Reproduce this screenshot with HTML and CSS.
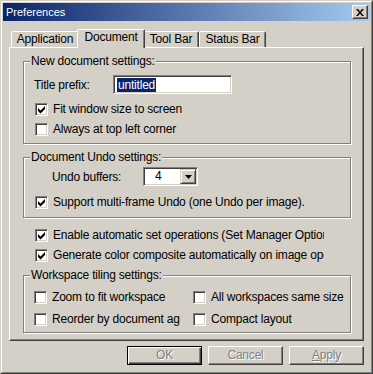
FILE: index.html
```html
<!DOCTYPE html>
<html lang="en">
<head>
    <meta charset="UTF-8">
    <title>Preferences</title>
    <link rel="stylesheet" href="styles.css">
</head>
<body>
    <div class="window">
        <div class="frame">
            <div class="titlebar">
                <span class="title">Preferences</span>
                <span class="close">
                    <svg width="8" height="7" viewBox="0 0 8 7"><path d="M0 0h2l2 2.4 2-2.4h2l-3 3.5 3 3.5h-2l-2-2.4-2 2.4h-2l3-3.5z" fill="#000"/></svg>
                </span>
            </div>

            <div class="client">
                <div class="tabs">
                    <div class="tab tab-app">Application</div>
                    <div class="tab tab-doc active">Document</div>
                    <div class="tab tab-tool">Tool Bar</div>
                    <div class="tab tab-status">Status Bar</div>
                </div>

                <div class="panel">
                    <div class="group g-new">
                        <div class="legend">New document settings:</div>
                        <div class="field">
                            <span class="field-label">Title prefix:</span>
                            <span class="textbox"><span class="selected">untitled</span></span>
                        </div>
                        <div class="check first">
                            <span class="box"><svg width="11" height="11" viewBox="0 0 11 11"><path d="M2 4l2.5 2.5L9 2v3L4.5 9.5 2 7z" fill="#000"/></svg></span>
                            <span class="text">Fit window size to screen</span>
                        </div>
                        <div class="check">
                            <span class="box"></span>
                            <span class="text">Always at top left corner</span>
                        </div>
                    </div>

                    <div class="group g-undo">
                        <div class="legend">Document Undo settings:</div>
                        <div class="field undo">
                            <span class="field-label">Undo buffers:</span>
                            <span class="select">
                                <span class="value">4</span>
                                <span class="drop"><svg width="7" height="4" viewBox="0 0 7 4"><path d="M0 0h7L3.5 4z" fill="#000"/></svg></span>
                            </span>
                        </div>
                        <div class="check first">
                            <span class="box"><svg width="11" height="11" viewBox="0 0 11 11"><path d="M2 4l2.5 2.5L9 2v3L4.5 9.5 2 7z" fill="#000"/></svg></span>
                            <span class="text">Support multi-frame Undo (one Undo per image).</span>
                        </div>
                    </div>

                    <div class="check solo first">
                        <span class="box"><svg width="11" height="11" viewBox="0 0 11 11"><path d="M2 4l2.5 2.5L9 2v3L4.5 9.5 2 7z" fill="#000"/></svg></span>
                        <span class="text">Enable automatic set operations (Set Manager Options)</span>
                    </div>
                    <div class="check solo">
                        <span class="box"><svg width="11" height="11" viewBox="0 0 11 11"><path d="M2 4l2.5 2.5L9 2v3L4.5 9.5 2 7z" fill="#000"/></svg></span>
                        <span class="text">Generate color composite automatically on image operations</span>
                    </div>

                    <div class="group g-tile">
                        <div class="legend">Workspace tiling settings:</div>
                        <div class="tiles">
                            <div class="check">
                                <span class="box"></span>
                                <span class="text">Zoom to fit workspace</span>
                            </div>
                            <div class="check">
                                <span class="box"></span>
                                <span class="text">All workspaces same size</span>
                            </div>
                            <div class="check">
                                <span class="box"></span>
                                <span class="text">Reorder by document age</span>
                            </div>
                            <div class="check">
                                <span class="box"></span>
                                <span class="text">Compact layout</span>
                            </div>
                        </div>
                    </div>
                </div>

                <div class="buttons">
                    <div class="btn default">OK</div>
                    <div class="btn">Cancel</div>
                    <div class="btn"><u>A</u>pply</div>
                </div>
            </div>
        </div>
    </div>
</body>
</html>
```

FILE: styles.css
```css
body {
    margin: 0;
    background-color: #d4d0c8;
    font-family: "Liberation Sans", Arial, sans-serif;
    font-size: 12px;
    letter-spacing: -0.2px;
    color: #000;
}
.window {
    width: 373px;
    height: 374px;
    box-sizing: border-box;
    border: 1px solid;
    border-color: #d4d0c8 #404040 #404040 #d4d0c8;
    background-color: #d4d0c8;
}
.frame {
    height: 100%;
    box-sizing: border-box;
    border: 1px solid;
    border-color: #fff #808080 #808080 #fff;
    padding: 1px;
}
.titlebar {
    height: 18px;
    display: flex;
    align-items: center;
    justify-content: space-between;
    padding: 0 2px 0 3px;
    background: linear-gradient(to right, #0a246a, #a6caf0);
    color: #fff;
    font-size: 11px;
    letter-spacing: 0;
}
.close {
    width: 16px;
    height: 14px;
    box-sizing: border-box;
    border: 1px solid;
    border-color: #fff #404040 #404040 #fff;
    box-shadow: inset -1px -1px #808080;
    background-color: #d4d0c8;
    display: flex;
    align-items: center;
    justify-content: center;
}
.close svg {
    display: block;
}
.client {
    padding: 0 6px;
}

/* tabs */
.tabs {
    display: flex;
    align-items: flex-end;
    height: 18px;
    margin-top: 8px;
    padding-left: 2px;
}
.tab {
    height: 16px;
    box-sizing: border-box;
    border: 1px solid;
    border-bottom: 0;
    border-color: #fff #404040 transparent #fff;
    box-shadow: inset -1px 0 #808080;
    border-radius: 2px 2px 0 0;
    text-align: center;
    line-height: 15px;
    background-color: #d4d0c8;
}
.tab-app { width: 68px; }
.tab-doc { width: 64px; }
.tab-tool { width: 56px; }
.tab-status { width: 67px; }
.tab.active {
    width: 68px;
    height: 19px;
    margin: 0 -2px -1px;
    position: relative;
    z-index: 1;
}
.panel {
    height: 294px;
    box-sizing: border-box;
    border: 1px solid;
    border-color: #fff #404040 #404040 #fff;
    box-shadow: inset -1px -1px #808080;
    padding: 13px 0 0 13px;
}

/* group boxes */
.group {
    width: 328px;
    box-sizing: border-box;
    border: 1px solid #808080;
    box-shadow: inset 1px 1px #fff, 1px 1px #fff;
}
.legend {
    display: table;
    margin: -8px 0 0 6px;
    padding: 0 1px;
    line-height: 14px;
    background-color: #d4d0c8;
}
.g-new { padding-bottom: 7px; }
.g-undo { margin-top: 13px; padding-bottom: 8px; }
.g-tile { margin-top: 13px; padding-bottom: 6px; }

.field {
    display: flex;
    align-items: center;
    height: 19px;
    margin-top: 7px;
    padding-left: 10px;
}
.field-label {
    width: 79px;
    flex: none;
}
.field.undo {
    margin-top: 3px;
    padding-left: 28px;
}
.field.undo .field-label {
    width: 91px;
}

.textbox,
.box,
.select {
    box-sizing: border-box;
    border: 1px solid;
    border-color: #808080 #fff #fff #808080;
    box-shadow: inset 1px 1px #404040, inset -1px -1px #d4d0c8;
    background-color: #fff;
}
.textbox {
    width: 119px;
    height: 19px;
    padding: 2px 0 0 3px;
}
.selected {
    display: inline-block;
    background-color: #0a246a;
    color: #fff;
    line-height: 14px;
    padding: 0 1px;
}
.select {
    display: flex;
    width: 55px;
    height: 19px;
    padding: 1px;
}
.select .value {
    flex: 1;
    padding-left: 10px;
    line-height: 15px;
}
.drop {
    width: 16px;
    box-sizing: border-box;
    border: 1px solid;
    border-color: #d4d0c8 #404040 #404040 #d4d0c8;
    box-shadow: inset 1px 1px #fff, inset -1px -1px #808080;
    background-color: #d4d0c8;
    display: flex;
    align-items: center;
    justify-content: center;
}
.drop svg {
    display: block;
}

/* check boxes */
.check {
    display: flex;
    align-items: center;
    height: 13px;
    line-height: 13px;
    white-space: nowrap;
    margin-top: 7px;
    margin-left: 11px;
    overflow: hidden;
}
.check.first { margin-top: 9px; }
.g-undo .check.first { margin-top: 10px; }
.box {
    width: 13px;
    height: 13px;
    flex: none;
    margin-right: 5px;
}
.box svg {
    display: block;
}
.check.solo {
    width: 289px;
    margin-left: 12px;
}
.check.solo.first { margin-top: 11px; }

.tiles {
    display: grid;
    grid-template-columns: 146px 1fr;
    column-gap: 13px;
    row-gap: 9px;
    margin-top: 9px;
    padding-left: 10px;
}
.tiles .check {
    margin: 0;
}

/* dialog buttons */
.buttons {
    display: flex;
    justify-content: flex-end;
    gap: 6px;
    margin-top: 5px;
}
.btn {
    width: 75px;
    height: 19px;
    box-sizing: border-box;
    border: 1px solid;
    border-color: #fff #404040 #404040 #fff;
    box-shadow: inset -1px -1px #808080;
    text-align: center;
    line-height: 17px;
    color: #808080;
    text-shadow: 1px 1px 0 #fff;
}
.btn.default {
    border-color: #000;
    box-shadow: inset 1px 1px #fff, inset -1px -1px #404040, inset -2px -2px #808080;
}
```
